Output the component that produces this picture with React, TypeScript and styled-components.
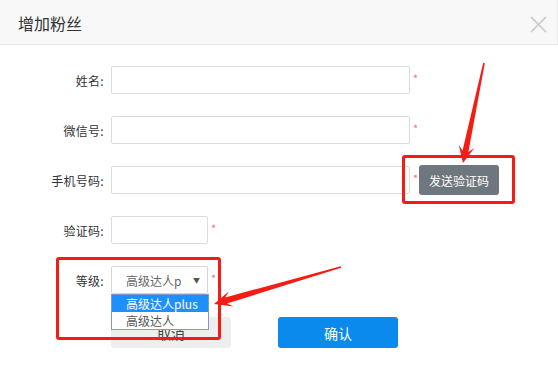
import styled, { createGlobalStyle } from 'styled-components'

type Pt = [number, number]

const GlobalStyle = createGlobalStyle`
  html, body {
    margin: 0;
    padding: 0;
    background: #fff;
  }
  body {
    font-family: 'Noto Sans CJK SC', 'Noto Sans', sans-serif;
    color: #333;
  }
`

// screenshot-tool style arrow: thin tail, widening shaft, swept-back barbs
const arrowPoints = (tail: Pt, tip: Pt, headLen = 17, headHalf = 8, neckHalf = 3) => {
  const dx = tip[0] - tail[0]
  const dy = tip[1] - tail[1]
  const len = Math.hypot(dx, dy)
  const d: Pt = [dx / len, dy / len]
  const n: Pt = [-d[1], d[0]]
  const at = (base: Pt, back: number, side: number): Pt => [
    base[0] - d[0] * back + n[0] * side,
    base[1] - d[1] * back + n[1] * side,
  ]
  const pts: Pt[] = [
    at(tail, 0, 0.8),
    at(tip, headLen * 0.7, neckHalf),
    at(tip, headLen, headHalf),
    tip,
    at(tip, headLen, -headHalf),
    at(tip, headLen * 0.7, -neckHalf),
    at(tail, 0, -0.8),
  ]
  return pts.map((p) => `${p[0].toFixed(1)},${p[1].toFixed(1)}`).join(' ')
}

const fields = [
  { label: '姓名:', wide: true },
  { label: '微信号:', wide: true },
  { label: '手机号码:', wide: true, sendCode: true },
  { label: '验证码:', wide: false },
]

export default function App() {
  return (
    <Dialog>
      <GlobalStyle />
      <Header>
        <Title>增加粉丝</Title>
        <CloseIcon viewBox="0 0 18 18">
          <path d="M1 1 L17 17 M17 1 L1 17" stroke="#cfcfcf" strokeWidth="2" />
        </CloseIcon>
      </Header>
      <Form>
        {fields.map((f) => (
          <Row key={f.label}>
            <Label>{f.label}</Label>
            <Input $wide={f.wide} />
            <Required>*</Required>
            {f.sendCode && <SendButton>发送验证码</SendButton>}
          </Row>
        ))}
        <Row>
          <Label>等级:</Label>
          <SelectWrap>
            <SelectBox>
              <SelectText>高级达人plus</SelectText>
              <Caret>▼</Caret>
            </SelectBox>
            <OptionList>
              <Option $active>高级达人plus</Option>
              <Option>高级达人</Option>
            </OptionList>
          </SelectWrap>
          <Required>*</Required>
        </Row>
        <Actions>
          <CancelButton>取消</CancelButton>
          <ConfirmButton>确认</ConfirmButton>
        </Actions>
      </Form>

      <Annotations>
        <MarkBox style={{ left: 402, top: 155, width: 113, height: 49 }} />
        <MarkBox style={{ left: 56, top: 257, width: 165, height: 83 }} />
        <ArrowLayer viewBox="0 0 558 365">
          <polygon points={arrowPoints([484, 63], [463, 163])} fill="#f51c14" />
          <polygon points={arrowPoints([341, 267], [214, 304], 18, 8, 3.2)} fill="#f51c14" />
        </ArrowLayer>
      </Annotations>
    </Dialog>
  )
}

const Dialog = styled.div`
  position: relative;
  width: 558px;
  height: 365px;
  overflow: hidden;
  background: #fff;
`

const Header = styled.div`
  height: 45px;
  box-sizing: border-box;
  display: flex;
  align-items: center;
  justify-content: space-between;
  padding: 2px 10px 0 18px;
  background: #f8f8f8;
  border-bottom: 1px solid #e6e6e6;
  border-right: 1px solid #ececec;
`

const Title = styled.span`
  font-size: 16px;
  color: #333;
`

const CloseIcon = styled.svg`
  width: 17px;
  height: 17px;
  margin-top: 2px;
`

const Form = styled.div`
  display: flex;
  flex-direction: column;
  gap: 22px;
  padding-top: 21px;
`

const Row = styled.div`
  display: flex;
  align-items: center;
  height: 28px;
`

const Label = styled.label`
  width: 104px;
  margin-right: 7px;
  text-align: right;
  font-size: 12px;
  letter-spacing: 0.3px;
  color: #333;
  white-space: nowrap;
`

const Input = styled.div<{ $wide?: boolean }>`
  width: ${(p) => (p.$wide ? '299px' : '97px')};
  height: 28px;
  box-sizing: border-box;
  border: 1px solid #dcdcdc;
  border-radius: 2px;
  background: #fff;
`

const Required = styled.span`
  align-self: flex-start;
  width: 6px;
  margin: 6px 0 0 3px;
  font-size: 11px;
  line-height: 12px;
  color: #f66f7a;
`

const SendButton = styled.div`
  width: 80px;
  height: 30px;
  border-radius: 3px;
  background: #6f777e;
  color: #fff;
  font-size: 12px;
  display: flex;
  align-items: center;
  justify-content: center;
`

const SelectWrap = styled.div`
  position: relative;
  width: 97px;
  height: 28px;
`

const SelectBox = styled.div`
  height: 28px;
  box-sizing: border-box;
  border: 1px solid #d6d6d6;
  border-radius: 2px;
  display: flex;
  align-items: center;
  padding: 0 7px 0 14px;
`

const SelectText = styled.span`
  width: 55px;
  overflow: hidden;
  white-space: nowrap;
  font-size: 12px;
  color: #666;
`

const Caret = styled.span`
  margin-left: auto;
  font-size: 7px;
  color: #555;
`

const OptionList = styled.div`
  position: absolute;
  top: 28px;
  left: 0;
  width: 98px;
  box-sizing: border-box;
  border: 1px solid #7a9ad0;
  background: #fff;
  z-index: 2;
`

const Option = styled.div<{ $active?: boolean }>`
  height: 17px;
  line-height: 17px;
  padding-left: 14px;
  font-size: 12px;
  white-space: nowrap;
  background: ${(p) => (p.$active ? '#1e8fff' : '#fff')};
  color: ${(p) => (p.$active ? '#fff' : '#555')};
`

const Actions = styled.div`
  display: flex;
  gap: 47px;
  padding-left: 111px;
  margin-top: 1px;
`

const BaseButton = styled.div`
  width: 120px;
  height: 31px;
  border-radius: 3px;
  font-size: 14px;
  display: flex;
  align-items: center;
  justify-content: center;
`

const CancelButton = styled(BaseButton)`
  background: #eeeeee;
  color: #444;
`

const ConfirmButton = styled(BaseButton)`
  background: #0b8aee;
  color: #fff;
`

const Annotations = styled.div`
  position: absolute;
  inset: 0;
  pointer-events: none;
  z-index: 5;
`

const MarkBox = styled.div`
  position: absolute;
  box-sizing: border-box;
  border: 3px solid #f51c14;
  border-radius: 3px;
`

const ArrowLayer = styled.svg`
  position: absolute;
  inset: 0;
  width: 558px;
  height: 365px;
`
